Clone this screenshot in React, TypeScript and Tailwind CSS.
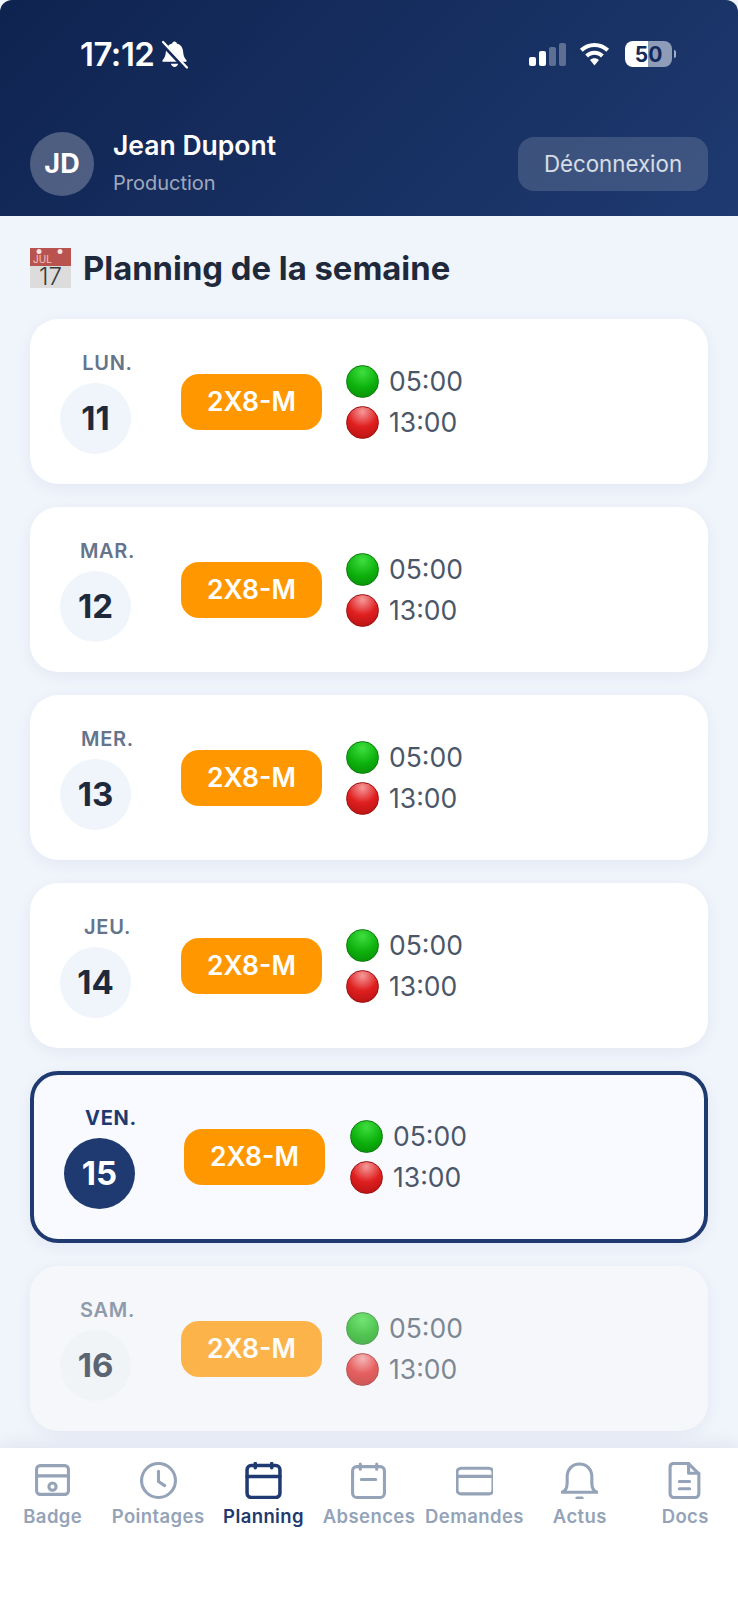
const days = [
  { label: 'LUN.', day: '11' },
  { label: 'MAR.', day: '12' },
  { label: 'MER.', day: '13' },
  { label: 'JEU.', day: '14' },
  { label: 'VEN.', day: '15', today: true },
  { label: 'SAM.', day: '16', muted: true },
];

function StatusBar() {
  return (
    <div className="flex h-[40px] items-center justify-between pl-[80px] pr-[62px] text-white">
      <div className="flex items-center gap-[6px]">
        <span className="text-[33px] leading-none font-semibold tracking-[-0.5px]">17:12</span>
        <svg width="29" height="29" viewBox="0 0 28 28">
          <path d="M14 1.500c-1.300 0-2 .9-2.200 1.900C8 4.300 6 7.300 5.700 11c-.3 3.500-.9 6-3.200 8.500-.5.6-.2 1.500.7 1.500h21.600c.9 0 1.200-.9.700-1.500-2.300-2.500-2.900-5-3.200-8.500C22 7.300 20 4.300 16.200 3.400 16 2.400 15.300 1.500 14 1.500z" fill="white" />
          <path d="M10.500 23h7c-.4 1.900-1.800 3-3.500 3s-3.100-1.100-3.500-3z" fill="white" />
          <path d="M1.500 2.500 25 27.500" stroke="#14285a" strokeWidth="4.500" />
          <path d="M3 2l23 24.500" stroke="white" strokeWidth="2.200" strokeLinecap="round" />
        </svg>
      </div>
      <div className="flex items-center">
        <div className="flex items-end gap-[3px]">
          <span className="h-[9px] w-[7px] rounded-[2px] bg-white" />
          <span className="h-[15px] w-[7px] rounded-[2px] bg-white" />
          <span className="h-[19px] w-[7px] rounded-[2px] bg-white/30" />
          <span className="h-[23px] w-[7px] rounded-[2px] bg-white/30" />
        </div>
        <svg width="31" height="23" viewBox="0 0 32 24" fill="white" className="ml-[13px]">
          <path d="M16 0C10 0 4.700 2.300.8 6.100l2.900 3.100C6.900 6.100 11.200 4.200 16 4.200s9.100 1.900 12.300 5l2.900-3.100C27.300 2.300 22 0 16 0z" />
          <path d="M16 8c-3.800 0-7.200 1.500-9.700 3.900l3 3.100c1.700-1.700 4.100-2.700 6.700-2.700s5 1 6.700 2.700l3-3.100C23.200 9.500 19.800 8 16 8z" />
          <path d="M16 16c-1.800 0-3.400.7-4.600 1.800L16 23.500l4.600-5.700C19.400 16.700 17.800 16 16 16z" />
        </svg>
        <div className="ml-[15px] flex items-center gap-[2px]">
          <div className="flex h-[26px] w-[47px] items-center justify-center rounded-[8px] bg-[linear-gradient(90deg,#ffffff_50%,#8f9cb8_50%)] text-[21px] leading-none font-bold text-[#14285a]">
            50
          </div>
          <span className="h-[8px] w-[2px] rounded-r-full bg-white/60" />
        </div>
      </div>
    </div>
  );
}

function CalendarEmoji() {
  return (
    <svg width="41" height="46" viewBox="0 -3 41 46" className="shrink-0">
      <rect x="0" y="0" width="41" height="40" fill="#dcdcdc" />
      <rect x="0" y="0" width="41" height="18" fill="#b9534f" />
      <circle cx="9" cy="3.500" r="2.500" fill="#f3e3e3" />
      <circle cx="30" cy="3.500" r="2.500" fill="#f3e3e3" />
      <text x="3" y="15" fontSize="10" fill="#eec9c6" fontFamily="Inter, sans-serif">JUL</text>
      <text x="20.500" y="37" fontSize="24" fontWeight="300" textAnchor="middle" fill="#3a3a3a" fontFamily="Inter, sans-serif">17</text>
    </svg>
  );
}

function Dot({ color }: { color: 'green' | 'red' }) {
  const cls = color === 'green'
    ? 'border-[#0b7a0b] bg-[radial-gradient(circle_at_50%_20%,#3ede3e_0%,#0cb00c_55%,#078a07_100%)]'
    : 'border-[#9c1010] bg-[radial-gradient(circle_at_50%_15%,#f59a9a_0%,#e01f1f_50%,#b01010_100%)]';
  return <span className={`h-[33px] w-[33px] rounded-full border ${cls}`} />;
}

function DayCard({ label, day, today, muted }: { label: string; day: string; today?: boolean; muted?: boolean }) {
  const cardCls = today
    ? 'border-[4px] border-[#1e3a70] bg-[#f8faff] pt-[29px] px-[30px] pb-[30px]'
    : muted
      ? 'bg-[#f5f7fa] p-[30px]'
      : 'bg-white p-[30px]';
  const labelCls = today ? 'text-[#1e3a70] font-bold' : 'text-[#64748b] font-semibold';
  const circleCls = today ? 'bg-[#1e3a70] text-white' : muted ? 'bg-[#f1f4f7] text-[#5b6473]' : 'bg-[#f0f4fb] text-[#1e293b]';

  return (
    <div className={`flex items-center rounded-[28px] shadow-[0_4px_16px_rgba(30,58,112,0.06)] ${cardCls}`}>
      <div className={`shrink-0 ${today ? 'w-[94px]' : 'w-[95px]'}`}>
        <div className={`h-[34px] text-center text-[20px] leading-[29px] tracking-[0.7px] ${labelCls} ${muted ? 'opacity-70' : ''}`}>{label}</div>
        <div className={`flex h-[71px] w-[71px] items-center justify-center rounded-full pt-[1px] text-[33px] font-bold ${circleCls}`}>{day}</div>
      </div>
      <div className={`ml-[26px] flex items-center ${muted ? 'opacity-70' : ''}`}>
        <div className="flex h-[56px] w-[141px] items-center justify-center rounded-[18px] bg-[#ff9800] text-[26.500px] font-semibold text-white">2X8-M</div>
        <div className={`flex flex-col gap-[8px] ${today ? 'ml-[25px]' : 'ml-[24px]'}`}>
          <div className="flex items-center gap-[10px]">
            <Dot color="green" />
            <span className="mt-[1px] text-[26.500px] leading-none text-[#4b5768]">05:00</span>
          </div>
          <div className="flex items-center gap-[10px]">
            <Dot color="red" />
            <span className="mt-[1px] text-[26.500px] leading-none text-[#4b5768]">13:00</span>
          </div>
        </div>
      </div>
    </div>
  );
}

const navIcons: Record<string, React.ReactNode> = {
  Badge: (
    <>
      <rect x="2.500" y="3.500" width="31" height="28" rx="3.500" />
      <path d="M2.500 13.500h31" />
      <circle cx="18" cy="24" r="3.500" />
    </>
  ),
  Pointages: (
    <>
      <circle cx="18" cy="18" r="16.500" />
      <path d="M18 9v10l6 4" />
    </>
  ),
  Planning: (
    <>
      <rect x="2" y="3.500" width="32" height="31" rx="4" />
      <path d="M2 14h32M10 1.500v4M26 1.500v4" />
    </>
  ),
  Absences: (
    <>
      <rect x="2.500" y="4.500" width="31" height="30" rx="4" />
      <path d="M10 2v5M26 2v5M11 17h14" />
    </>
  ),
  Demandes: (
    <>
      <rect x="1" y="6" width="35" height="25" rx="4" />
      <path d="M1 14h35" />
    </>
  ),
  Actus: (
    <>
      <path d="M1 29.500c3-1 5-4 5-9v-6C6 7 11 2 18 2s12 5 12 12.500v6c0 5 2 8 5 9z" />
      <path d="M15.500 35h5" />
    </>
  ),
  Docs: (
    <>
      <path d="M6 1.500h15l10 10V31a3.500 3.500 0 0 1-3.500 3.500h-21A3.500 3.500 0 0 1 3 31V5a3.500 3.500 0 0 1 3-3.500z" />
      <path d="M21 1.500V11h10M12 19h10M12 26h10" />
    </>
  ),
};

function BottomNav() {
  const items = ['Badge', 'Pointages', 'Planning', 'Absences', 'Demandes', 'Actus', 'Docs'];
  return (
    <nav className="grid h-[152px] shrink-0 grid-cols-7 bg-white pt-[14px] shadow-[0_-4px_16px_rgba(30,58,112,0.08)]">
      {items.map((name) => {
        const active = name === 'Planning';
        return (
          <div key={name} className={`flex flex-col items-center ${active ? 'text-[#1e3a70]' : 'text-[#94a3b8]'}`}>
            <svg width="37" height="37" viewBox="0 0 36 36" fill="none" stroke="currentColor" strokeWidth={active ? 3.4 : 3} strokeLinecap="round" strokeLinejoin="round">
              {navIcons[name]}
            </svg>
            <span className="mt-[5px] text-[18.500px] leading-[24px] font-semibold tracking-[0.4px] whitespace-nowrap">{name}</span>
          </div>
        );
      })}
    </nav>
  );
}

export default function App() {
  return (
    <div className="flex h-[1600px] w-[738px] flex-col overflow-hidden bg-[#f0f4fb] font-['Inter',sans-serif]">
      <header className="h-[216px] shrink-0 rounded-t-[12px] bg-[linear-gradient(135deg,#0f2350_0%,#1e3a70_100%)] pt-[34px]">
        <StatusBar />
        <div className="mt-[58px] flex items-center justify-between px-[30px]">
          <div className="flex items-center gap-[19px]">
            <div className="flex h-[64px] w-[64px] items-center justify-center rounded-full bg-white/25 text-[27px] font-bold text-white">JD</div>
            <div className="-mt-[6px]">
              <div className="text-[26.500px] leading-[32px] font-semibold text-white">Jean Dupont</div>
              <div className="mt-[9px] -mb-[3px] text-[20px] leading-[26px] text-white/60">Production</div>
            </div>
          </div>
          <div className="flex h-[54px] w-[190px] items-center justify-center rounded-[16px] bg-white/15 text-[22.300px] text-white/80">Déconnexion</div>
        </div>
      </header>
      <main className="min-h-0 flex-1 overflow-hidden px-[30px] pt-[32px]">
        <div className="flex h-[40px] items-center gap-[12px]">
          <CalendarEmoji />
          <h1 className="mt-[1px] text-[32.800px] font-bold text-[#1e293b]">Planning de la semaine</h1>
        </div>
        <div className="mt-[31px] flex flex-col gap-[23px]">
          {days.map((d) => (
            <DayCard key={d.day} {...d} />
          ))}
        </div>
      </main>
      <BottomNav />
    </div>
  );
}
